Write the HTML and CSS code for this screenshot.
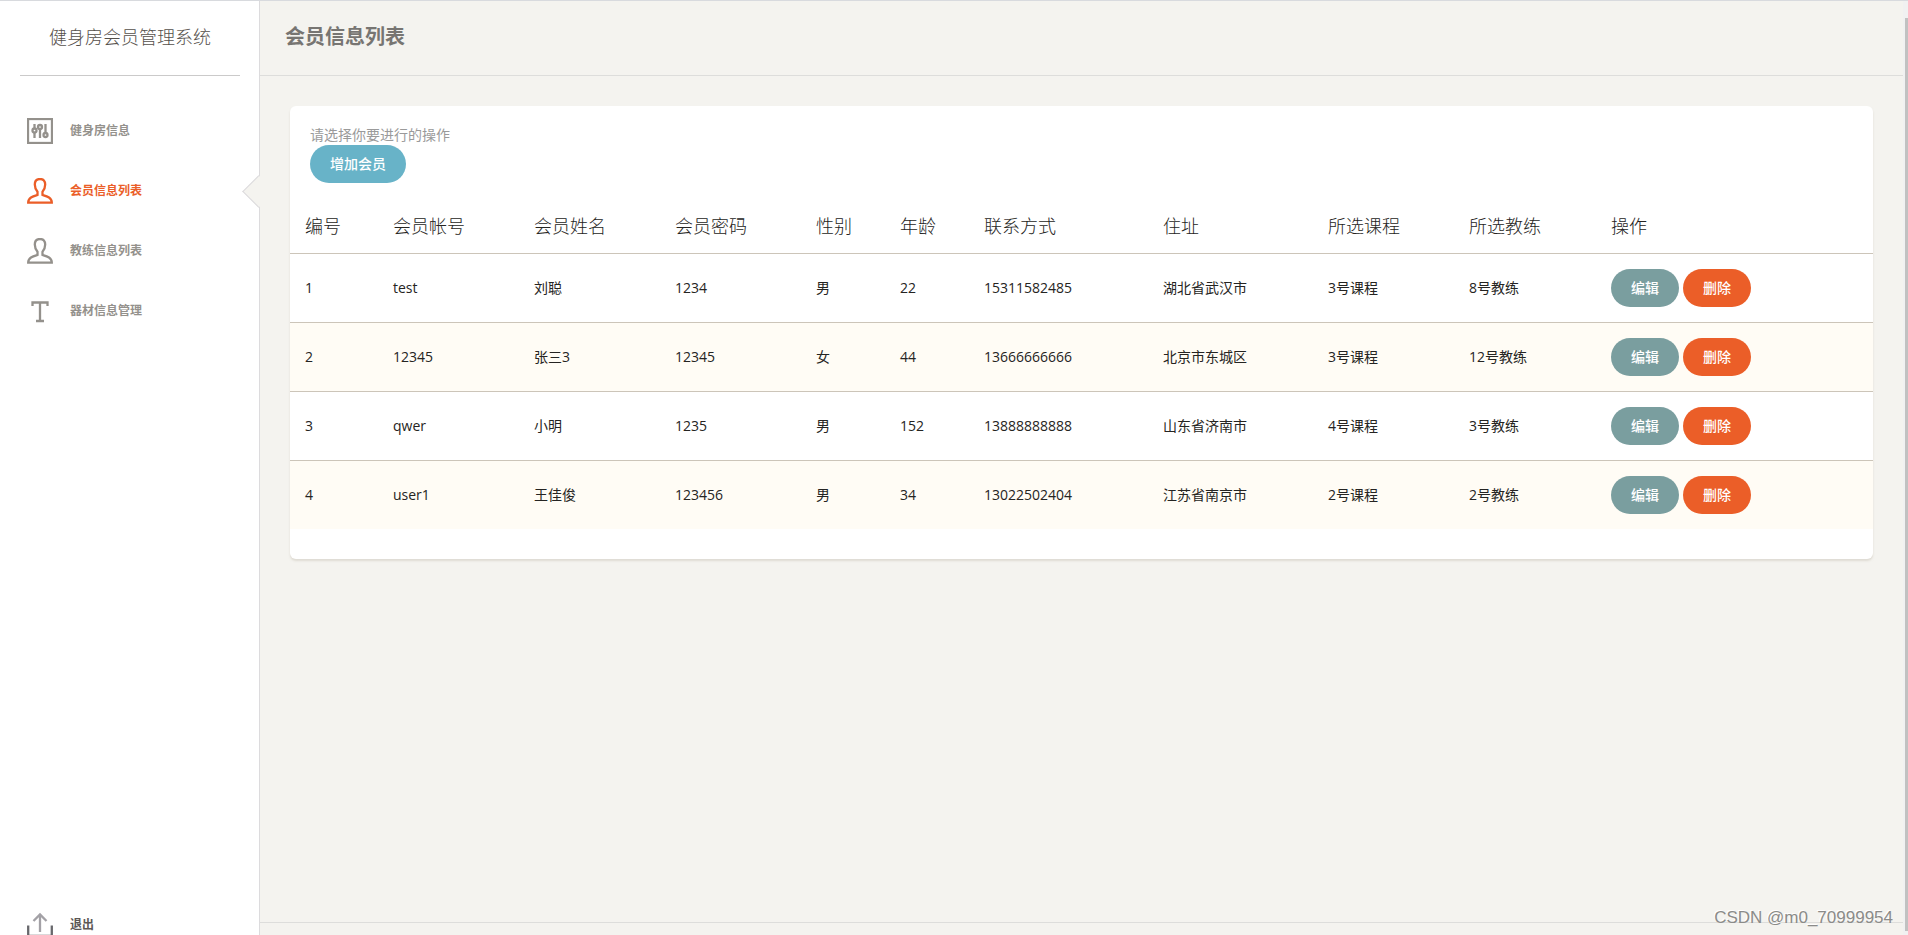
FILE: index.html
```
<!DOCTYPE html>
<html lang="zh-CN">
<head>
<meta charset="utf-8">
<title>会员信息列表</title>
<link rel="stylesheet" href="styles.css">
</head>
<body>
<div class="shell">
  <aside class="sidebar">
    <div class="brand">健身房会员管理系统</div>
    <nav class="menu">
      <a class="menu-item" href="#gym">
        <svg class="icon" viewBox="0 0 26 26" aria-hidden="true"><rect x="1" y="1" width="24" height="24"/><path d="M7.500 6v4M7.500 15v5M13 6v1M13 11v9M18.500 6v9"/><circle cx="7.500" cy="12.500" r="2"/><circle cx="13" cy="9" r="2"/><circle cx="18.500" cy="17" r="2"/></svg>
        <span>健身房信息</span>
      </a>
      <a class="menu-item active" href="#members" aria-current="page">
        <svg class="icon" viewBox="0 0 26 26" aria-hidden="true"><path d="M13 1C9.500 1 7.800 3 7.800 6.500c0 3.500 1.200 5.500 2.700 7.300V17C6 18.300 1.200 19.500 1.200 24.700h23.600c0-5.200-4.800-6.400-9.300-7.700v-3.200c1.500-1.800 2.700-3.800 2.700-7.300C18.200 3 16.500 1 13 1z"/></svg>
        <span>会员信息列表</span>
      </a>
      <a class="menu-item" href="#coaches">
        <svg class="icon" viewBox="0 0 26 26" aria-hidden="true"><path d="M13 1C9.500 1 7.800 3 7.800 6.500c0 3.500 1.200 5.500 2.700 7.300V17C6 18.300 1.200 19.500 1.200 24.700h23.600c0-5.200-4.800-6.400-9.300-7.700v-3.200c1.500-1.800 2.700-3.800 2.700-7.300C18.200 3 16.500 1 13 1z"/></svg>
        <span>教练信息列表</span>
      </a>
      <a class="menu-item" href="#equipment">
        <svg class="icon" viewBox="0 0 26 26" aria-hidden="true"><path d="M5.500 8V4.500h15V8M13 4.500V22M9 23h8"/></svg>
        <span>器材信息管理</span>
      </a>
    </nav>
    <a class="menu-item logout" href="#logout">
      <svg class="icon" viewBox="0 0 26 26" aria-hidden="true"><path class="tray" d="M1.200 13.500v10.500h23.600V13.500"/><path class="arrow" d="M13 20V2.500M6.500 9L13 2.500 19.500 9"/></svg>
      <span>退出</span>
    </a>
  </aside>
  <div class="page">
    <header class="page-header"><h1>会员信息列表</h1></header>
    <main class="content">
      <section class="card">
        <div class="toolbar">
          <p>请选择你要进行的操作</p>
          <button class="btn add" type="button">增加会员</button>
        </div>
        <table>
          <colgroup><col class="c-id"><col class="c-mid"><col class="c-mid"><col class="c-mid"><col class="c-small"><col class="c-small"><col class="c-phone"><col class="c-addr"><col class="c-mid"><col class="c-coach"><col></colgroup>
          <thead><tr><th>编号</th><th>会员帐号</th><th>会员姓名</th><th>会员密码</th><th>性别</th><th>年龄</th><th>联系方式</th><th>住址</th><th>所选课程</th><th>所选教练</th><th>操作</th></tr></thead>
          <tbody>
            <tr><td>1</td><td>test</td><td>刘聪</td><td>1234</td><td>男</td><td>22</td><td>15311582485</td><td>湖北省武汉市</td><td>3号课程</td><td>8号教练</td><td><div class="actions"><button class="btn edit" type="button">编辑</button><button class="btn delete" type="button">删除</button></div></td></tr>
            <tr><td>2</td><td>12345</td><td>张三3</td><td>12345</td><td>女</td><td>44</td><td>13666666666</td><td>北京市东城区</td><td>3号课程</td><td>12号教练</td><td><div class="actions"><button class="btn edit" type="button">编辑</button><button class="btn delete" type="button">删除</button></div></td></tr>
            <tr><td>3</td><td>qwer</td><td>小明</td><td>1235</td><td>男</td><td>152</td><td>13888888888</td><td>山东省济南市</td><td>4号课程</td><td>3号教练</td><td><div class="actions"><button class="btn edit" type="button">编辑</button><button class="btn delete" type="button">删除</button></div></td></tr>
            <tr><td>4</td><td>user1</td><td>王佳俊</td><td>123456</td><td>男</td><td>34</td><td>13022502404</td><td>江苏省南京市</td><td>2号课程</td><td>2号教练</td><td><div class="actions"><button class="btn edit" type="button">编辑</button><button class="btn delete" type="button">删除</button></div></td></tr>
          </tbody>
        </table>
      </section>
    </main>
    <footer class="page-footer"></footer>
  </div>
  <div class="scroll-track"><div class="scroll-thumb"></div></div>
</div>
<div class="watermark">CSDN @m0_70999954</div>
</body>
</html>
```
FILE: styles.css
```
* { box-sizing: border-box; }
html { height: 100%; overflow: hidden; }
body {
  position: relative;
  height: 100%;
  margin: 0;
  overflow: hidden;
  background: #f4f3ef;
  color: #252422;
  font: 14px/20px "Open Sans", "Noto Sans CJK SC", sans-serif;
}
.shell {
  display: flex;
  height: calc(100vh + 20px);
  border-top: 1px solid #d8dade;
}

.sidebar {
  display: flex;
  flex-direction: column;
  flex: none;
  width: 260px;
  background: #fff;
  border-right: 1px solid #dcdbdd;
}
.brand {
  margin: 0 19px 0 20px;
  padding: 22px 0 23px;
  border-bottom: 1px solid #cbcaca;
  color: #55504b;
  font-size: 18px;
  font-weight: 300;
  line-height: 29px;
  text-align: center;
}
.menu { margin-top: 25px; }
.menu-item {
  position: relative;
  display: flex;
  align-items: center;
  gap: 17px;
  height: 60px;
  padding-left: 27px;
  color: #94918c;
  font-size: 12px;
  font-weight: 600;
  text-decoration: none;
}
.icon {
  width: 26px;
  height: 26px;
  fill: none;
  stroke: currentColor;
  stroke-width: 2.3;
}
.active { color: #eb5e28; }
.active::before {
  content: "";
  position: absolute;
  top: 19px;
  right: -11px;
  width: 22px;
  height: 22px;
  background: #f4f3ef;
  border: solid #dcdbdd;
  border-width: 0 0 1px 1px;
  transform: rotate(45deg);
}
.logout { margin-top: auto; color: #5c5755; }
.tray { stroke: #68686c; }
.arrow { stroke: #a3a1a6; }

.page {
  display: flex;
  flex-direction: column;
  flex: 1;
  min-width: 0;
}
.page-header {
  padding: 21px 25px 23px;
  border-bottom: 1px solid #dddddb;
}
h1 {
  margin: 0;
  color: #777572;
  font-size: 20px;
  line-height: 30px;
}
.content { flex: 1; padding: 30px; }
.card {
  padding-bottom: 30px;
  background: #fff;
  border-radius: 6px;
  box-shadow: 0 2px 2px rgba(204, 197, 185, 0.5);
}
.toolbar { padding: 19px 20px 15px; }
.toolbar p { margin: 0; color: #9a9a9a; }
.btn {
  height: 38px;
  padding: 0 20px;
  border: 0;
  border-radius: 19px;
  color: #fff;
  font: 500 14px/20px "Open Sans", "Noto Sans CJK SC", sans-serif;
}
.add { display: block; background: #68b3c8; }
.edit { background: #7a9e9f; }
.delete { background: #eb5e28; }

table { width: 100%; border-collapse: collapse; table-layout: fixed; }
th, td { padding: 15px; text-align: left; white-space: nowrap; }
th {
  padding-bottom: 13px;
  border-bottom: 1px solid #ccc5b9;
  font-size: 18px;
  font-weight: 300;
  line-height: 27px;
}
tbody tr + tr { border-top: 1px solid #ccc5b9; }
tbody tr:nth-child(even) { background: #fffcf5; }
.c-id { width: 88px; }
.c-mid { width: 141px; }
.c-small { width: 84px; }
.c-phone { width: 179px; }
.c-addr { width: 165px; }
.c-coach { width: 142px; }
.actions { display: flex; gap: 4px; }

.page-footer { height: 33px; border-top: 1px solid #dddddb; }
.scroll-track {
  flex: none;
  width: 5px;
  padding: 17px 0 24px 2px;
  background: #f1f1f1;
}
.scroll-thumb { height: 100%; background: #c1c1c1; }
.watermark {
  position: absolute;
  right: 15px;
  bottom: 7px;
  color: #8b8b89;
  font: 17px/20px "Liberation Sans", Arial, sans-serif;
  text-shadow: -1px -1px 0 #fff;
}
```
